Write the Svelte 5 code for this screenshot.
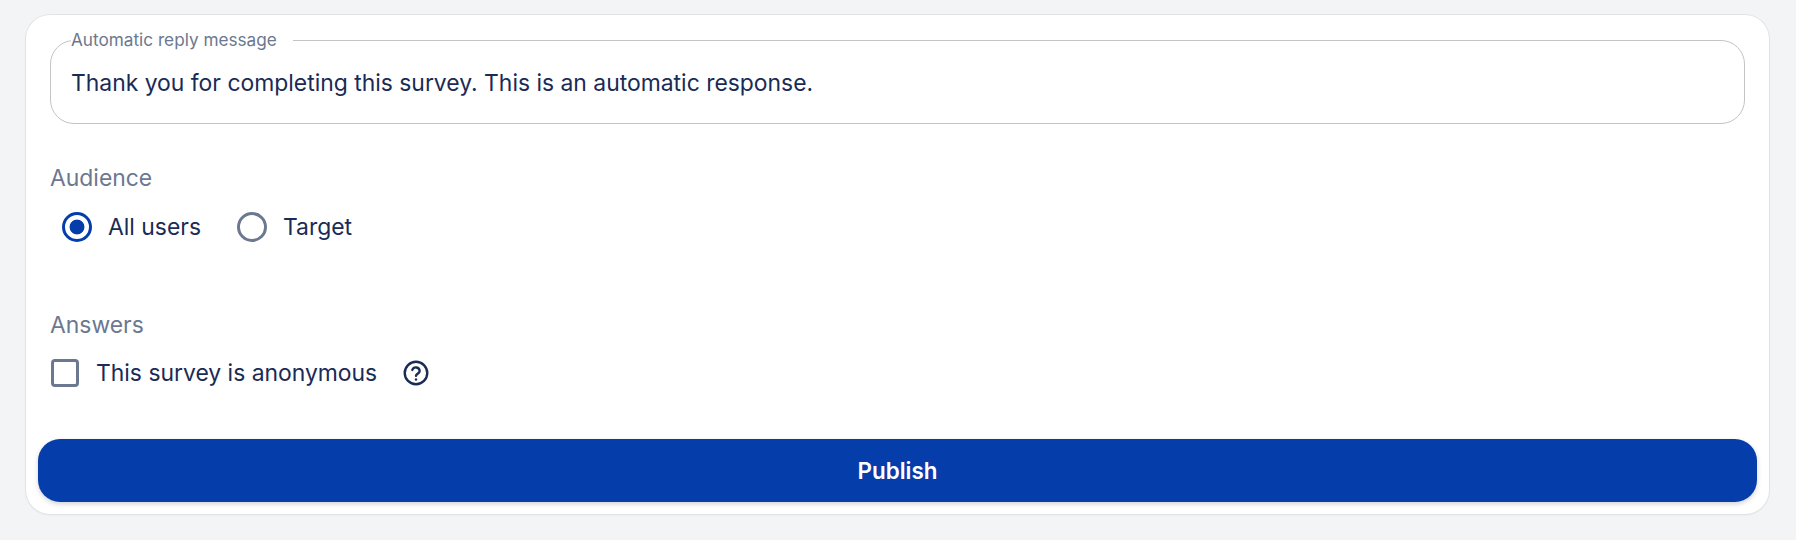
<script lang="ts">
  let message = $state('Thank you for completing this survey. This is an automatic response.');
  let audience = $state('all');
  let anonymous = $state(false);
</script>

<div class="page">
  <form class="card" onsubmit={(e) => e.preventDefault()}>
    <fieldset class="message">
      <legend>Automatic reply message</legend>
      <input bind:value={message} type="text" />
    </fieldset>

    <div class="section audience">
      <div class="section-label">Audience</div>
      <div class="radios">
        <label class="radio">
          <input bind:group={audience} type="radio" name="audience" value="all" />
          <span>All users</span>
        </label>
        <label class="radio">
          <input bind:group={audience} type="radio" name="audience" value="target" />
          <span>Target</span>
        </label>
      </div>
    </div>

    <div class="section answers">
      <div class="section-label">Answers</div>
      <div class="check-row">
        <label class="check">
          <input bind:checked={anonymous} type="checkbox" />
          <span>This survey is anonymous</span>
        </label>
        <svg class="help" viewBox="0 0 24 24" fill="none" stroke="currentColor" stroke-width="2.2" stroke-linecap="round" stroke-linejoin="round" aria-hidden="true">
          <circle cx="12" cy="12" r="10.4" />
          <path d="M8.6 9.2a3.5 3.5 0 0 1 6.8 1c0 2.2-3.4 2.7-3.4 4.3" />
          <path d="M12 18h.01" />
        </svg>
      </div>
    </div>

    <button type="submit">Publish</button>
  </form>
</div>

<style>
  :global(body) {
    background: #f3f4f6;
  }

  .page {
    padding: 15px 27px 25px 26px;
    font-family: Inter, "Liberation Sans", sans-serif;
    color: #1a2b55;
  }

  .card {
    height: 499px;
    box-sizing: border-box;
    background: #fff;
    border-radius: 24px;
    box-shadow: 0 0 0 1px #e2e3e6, 0 1px 2px rgba(0, 0, 0, 0.08);
    padding: 16px 12px 12px;
    display: flex;
    flex-direction: column;
  }

  .message {
    margin: 0 12px;
    padding: 0 11px 0 20px;
    height: 93px;
    box-sizing: border-box;
    border: 1px solid #c4c4c6;
    border-radius: 24px;
  }

  legend {
    padding: 0 16px 0 0;
    font-size: 17.2px;
    line-height: 18px;
    color: #6b7890;
  }

  .message input {
    display: block;
    width: 100%;
    box-sizing: border-box;
    border: 0;
    outline: 0;
    padding: 0;
    margin-top: 17px;
    font: inherit;
    font-size: 22.9px;
    line-height: 34px;
    color: inherit;
    background: transparent;
  }

  .section {
    margin: 0 12px;
  }

  .audience {
    margin-top: 40px;
  }

  .answers {
    margin-top: 67px;
  }

  .section-label {
    font-size: 22.9px;
    line-height: 28px;
    color: #6b7890;
  }

  .radios {
    display: flex;
    gap: 36px;
    padding: 18px 0 0 12px;
  }

  .radio,
  .check {
    display: inline-flex;
    align-items: center;
    font-size: 22.9px;
    line-height: 34px;
  }

  .radio {
    gap: 16px;
  }

  input[type='radio'] {
    appearance: none;
    width: 30px;
    height: 30px;
    margin: 0;
    box-sizing: border-box;
    border: 3px solid #6b7890;
    border-radius: 50%;
    background: #fff;
  }

  input[type='radio']:checked {
    border-color: #053dab;
    background: radial-gradient(circle, #053dab 0 7px, #fff 7.8px);
  }

  .check-row {
    display: flex;
    align-items: center;
    gap: 26px;
    padding: 17px 0 0 1px;
  }

  .check {
    gap: 17px;
  }

  input[type='checkbox'] {
    appearance: none;
    width: 28px;
    height: 28px;
    margin: 0;
    box-sizing: border-box;
    border: 3px solid #6b7890;
    border-radius: 4px;
    background: #fff;
  }

  .help {
    width: 26px;
    height: 26px;
    color: #1a2b55;
  }

  button {
    margin-top: auto;
    height: 63px;
    border: 0;
    border-radius: 22px;
    background: #053dab;
    color: #fff;
    font: inherit;
    font-size: 22.4px;
    font-weight: 600;
    box-shadow: 0 2px 5px rgba(0, 0, 0, 0.18);
    cursor: pointer;
  }
</style>
